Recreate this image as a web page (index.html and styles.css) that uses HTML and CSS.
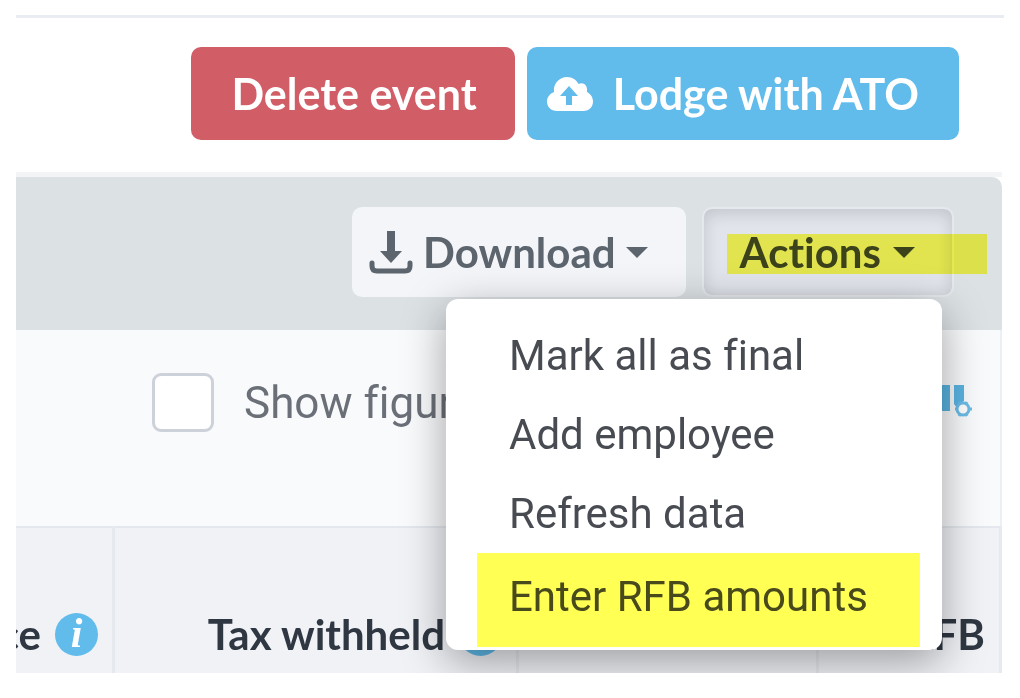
FILE: index.html
```
<!DOCTYPE html>
<html lang="en">
<head>
  <meta charset="UTF-8">
  <meta name="viewport" content="width=device-width, initial-scale=1.0">
  <title>Pay event</title>
  <link rel="stylesheet" href="styles.css">
</head>
<body>
  <main class="page">
    <header class="page-header">
      <button type="button" class="btn btn-danger">Delete event</button>
      <button type="button" class="btn btn-primary">
        <svg class="cloud-icon" viewBox="0 0 46 34" aria-hidden="true">
          <path fill="#fff" d="M10 34C4 34 0 30 0 24.500C0 20 3 16.500 7 15C6 7 12 0 20 0C25.500 0 29.500 3 31.500 7C36 4.500 41 8 40 15C43.500 17 46 20 46 24.500C46 30 42 34 36.500 34Z"/>
          <path fill="#61bbeb" d="M22 9L31 19H25V28H19V19H13Z"/>
        </svg>
        <span>Lodge with ATO</span>
      </button>
    </header>

    <section class="panel">
      <div class="toolbar">
        <button type="button" class="btn btn-light">
          <svg class="download-icon" viewBox="0 0 44 44" aria-hidden="true">
            <path fill="#5c646e" d="M18 1H26V21H33L22 33L11 21H18Z"/>
            <path fill="none" stroke="#5c646e" stroke-width="5" stroke-linecap="round" d="M3 33V36Q3 41 8 41H36Q41 41 41 36V33"/>
          </svg>
          <span>Download</span>
          <span class="caret"></span>
        </button>
        <div class="dropdown">
          <button type="button" class="btn btn-active" aria-expanded="true">
            <span>Actions</span>
            <span class="caret"></span>
          </button>
          <div class="marker"></div>
          <ul class="menu">
            <li><a href="#">Mark all as final</a></li>
            <li><a href="#">Add employee</a></li>
            <li><a href="#">Refresh data</a></li>
            <li class="marked"><a href="#">Enter RFB amounts</a></li>
          </ul>
        </div>
      </div>

      <div class="filters">
        <label class="check">
          <input type="checkbox">
          <span>Show figures</span>
        </label>
        <button type="button" class="columns-btn" aria-label="Columns">
          <svg viewBox="0 0 44 34" width="44" height="34" aria-hidden="true">
            <path fill="#5ab4e2" d="M0 1H9V27H0ZM12 1H22V27H12ZM26 1H36V17L31 20L29 24L26 20Z"/>
            <circle cx="35" cy="25" r="6" fill="#fff" stroke="#6bbce8" stroke-width="3"/>
            <path stroke="#6bbce8" stroke-width="3" d="M27 25H29M41 25H44M31 18L32 20M39 18L38 20M31 32L32 30M39 32L38 30"/>
          </svg>
        </button>
      </div>

      <table class="figures">
        <colgroup>
          <col>
          <col class="col-tax">
          <col class="col-sg">
          <col class="col-rfb">
        </colgroup>
        <thead>
          <tr>
            <th><div class="head">Allowance <span class="info">i</span></div></th>
            <th><div class="head">Tax withheld <span class="info">i</span></div></th>
            <th><div class="head">SG</div></th>
            <th><div class="head">RFB</div></th>
          </tr>
        </thead>
      </table>
    </section>
  </main>
</body>
</html>
```
FILE: styles.css
```
* {
  box-sizing: border-box;
}

body {
  margin: 0;
  background: #fff;
  font-family: Roboto, "Liberation Sans", sans-serif;
  font-size: 42px;
  font-variant-ligatures: none;
  color: #3f4650;
}

.page {
  margin: 15px 16px 25px;
  border-top: 3px solid #e9edf3;
  overflow: hidden;
}

.page-header {
  display: flex;
  justify-content: flex-end;
  gap: 12px;
  padding: 29px 45px 32px 0;
}

.btn {
  display: flex;
  align-items: center;
  height: 93px;
  border: 0;
  border-radius: 10px;
  font-family: Lato, "Liberation Sans", sans-serif;
  font-size: 43px;
  font-variant-ligatures: none;
  font-weight: 700;
  white-space: nowrap;
}

.btn-danger {
  padding: 0 38px 0 40px;
  background: #d15d67;
  color: #fff;
}

.btn-primary {
  gap: 20px;
  padding: 0 40px 0 20px;
  background: #61bbeb;
  color: #fff;
}

.cloud-icon {
  width: 46px;
  height: 34px;
}

.panel {
  margin-right: 2px;
  border-top: 5px solid #f2f4f6;
}

.toolbar {
  display: flex;
  justify-content: flex-end;
  gap: 16px;
  padding: 30px 48px 33px 0;
  background: #dce1e4;
  border-top-right-radius: 10px;
}

.btn-light,
.btn-active {
  height: 90px;
  font-size: 42px;
}

.btn-light {
  gap: 10px;
  padding: 0 38px 0 17px;
  background: #f3f5f8;
  color: #5c646e;
}

.btn-active {
  gap: 12px;
  padding: 0 37px 0 36px;
  border: 2px solid #e5e8ec;
  background: #e1e4eb;
  box-shadow: inset 0 4px 16px rgba(0, 0, 0, 0.14);
  color: #3c424a;
}

.download-icon {
  width: 44px;
  height: 44px;
}

.caret {
  border: 11px solid transparent;
  border-top-color: currentColor;
  border-bottom: 0;
}

.dropdown {
  position: relative;
}

/* highlighter stroke over the button */
.marker {
  position: absolute;
  top: 27px;
  left: 25px;
  right: -33px;
  height: 40px;
  background: #ffff54;
  mix-blend-mode: multiply;
}

.menu {
  position: absolute;
  z-index: 2;
  top: 92px;
  right: 12px;
  width: 496px;
  margin: 0;
  padding: 17px 22px 3px 31px;
  list-style: none;
  background: #fff;
  border-radius: 12px;
  box-shadow: 0 12px 44px rgba(0, 0, 0, 0.36);
}

.menu a {
  display: block;
  padding-left: 32px;
  line-height: 79px;
  color: #484c52;
  text-decoration: none;
  white-space: nowrap;
}

.menu .marked {
  padding: 4px 0 11px;
  background: #ffff54;
}

.menu .marked a {
  color: #484a1c;
}

.filters {
  display: flex;
  justify-content: space-between;
  align-items: flex-start;
  padding: 43px 28px 94px 136px;
  background: #f9fafc;
  border-right: 2px solid #eceff3;
}

.check {
  display: flex;
  align-items: center;
  gap: 30px;
  height: 59px;
  font-size: 44px;
  color: #6b7078;
}

.check input {
  appearance: none;
  width: 62px;
  height: 59px;
  margin: 0;
  background: #fff;
  border: 3px solid #cdd2da;
  border-radius: 9px;
}

.columns-btn {
  margin-top: 11px;
  padding: 0;
  border: 0;
  background: none;
}

.columns-btn svg {
  display: block;
}

.figures {
  width: 100%;
  table-layout: fixed;
  border-collapse: collapse;
  background: #f0f2f6;
}

.col-tax {
  width: 404px;
}

.col-sg {
  width: 300px;
}

.col-rfb {
  width: 183px;
}

.figures th {
  padding: 80px 14px 13px 0;
  border-top: 2px solid #e4e8ee;
  border-right: 3px solid #e6e9ee;
  font-family: Lato, "Liberation Sans", sans-serif;
  font-size: 42px;
  font-weight: 700;
  color: #2f3742;
}

.head {
  display: flex;
  align-items: center;
  justify-content: flex-end;
  gap: 14px;
  line-height: 52px;
  white-space: nowrap;
}

.info {
  flex: none;
  width: 43px;
  height: 43px;
  border-radius: 50%;
  background: #61bbeb;
  color: #fff;
  font-family: "Liberation Serif", serif;
  font-size: 42px;
  font-style: italic;
  line-height: 41px;
  text-align: center;
}
```
